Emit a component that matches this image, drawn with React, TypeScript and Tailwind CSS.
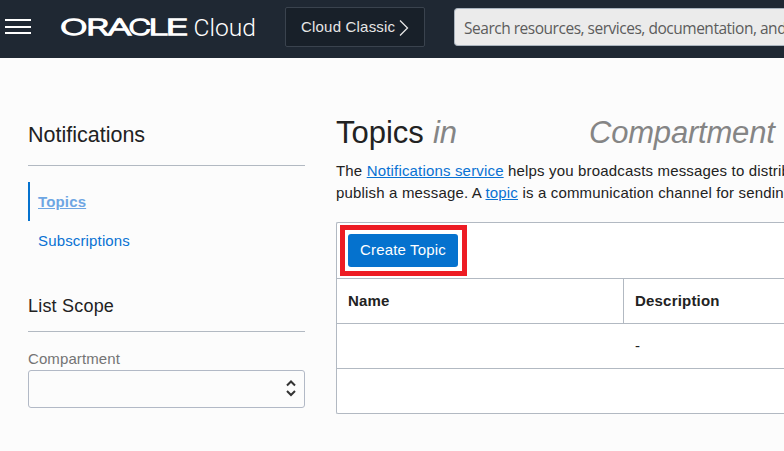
function Header() {
  return (
    <header className="flex h-[58px] shrink-0 items-start bg-[#1f2833]">
      <button aria-label="Menu" className="mt-[19px] ml-[5px] flex w-[26px] shrink-0 flex-col gap-[5px]">
        <span className="h-0.5 bg-white" />
        <span className="h-0.5 bg-white" />
        <span className="-mt-px h-0.5 bg-white" />
      </button>
      <svg className="ml-[29px] h-[58px] w-[200px] shrink-0" viewBox="60 0 200 58" fill="#fff" aria-label="Oracle Cloud">
        <g fontFamily="Inter, sans-serif" fontWeight="200" fontSize="22" stroke="#fff" strokeWidth="1.6">
          <text x="60" y="35.4" textLength="27.5" lengthAdjust="spacingAndGlyphs">O</text>
          <text x="86" y="35.4" textLength="23" lengthAdjust="spacingAndGlyphs">R</text>
          <text x="107.5" y="35.4" textLength="24" lengthAdjust="spacingAndGlyphs">A</text>
          <text x="128.5" y="35.4" textLength="22.5" lengthAdjust="spacingAndGlyphs">C</text>
          <text x="148.5" y="35.4" textLength="20" lengthAdjust="spacingAndGlyphs">L</text>
          <text x="165.5" y="35.4" textLength="23" lengthAdjust="spacingAndGlyphs">E</text>
        </g>
        <text x="193.5" y="36" fontFamily="Roboto, sans-serif" fontWeight="300" fontSize="24.5" textLength="62.5" lengthAdjust="spacingAndGlyphs">Cloud</text>
      </svg>
      <button className="mt-[7px] ml-[25px] flex h-10 w-[140px] shrink-0 items-center rounded-[2px] border border-[#3a434e] bg-[#182029] pl-[15px] text-[15px] tracking-[0.2px] whitespace-nowrap text-[#e6e6e6]">
        Cloud Classic
        <svg className="mt-px ml-[4px] h-4 w-[10px]" viewBox="0 0 10 16" fill="none" stroke="#e6e6e6" strokeWidth="1.3">
          <path d="M1 .5 8.5 8 1 15.5" />
        </svg>
      </button>
      <div className="mt-2 ml-[29px] flex h-[38px] flex-1 items-center overflow-hidden rounded-l-[4px] border border-r-0 border-[#aab4be] bg-[#ebebeb] pt-[3px] pl-[9px] font-['Open_Sans',sans-serif] text-[15.5px] tracking-[-0.48px] whitespace-nowrap text-[#5c5c5c]">
        Search resources, services, documentation, and
      </div>
    </header>
  );
}

function Sidebar() {
  return (
    <aside className="w-[277px] shrink-0 pt-[62px]">
      <h2 className="h-[46px] border-b border-[#b2b9c2] text-[21.5px] leading-[30px]">Notifications</h2>
      <nav className="mt-4 flex flex-col text-[15px] tracking-[0.15px] text-[#0972d3]">
        <a className="flex h-[39px] items-center border-l-2 border-[#0572ce] pt-0.5 pl-2 font-bold text-[#6ea6e3] underline">
          Topics
        </a>
        <a className="flex h-[39px] items-center pt-0.5 pl-[10px]">Subscriptions</a>
      </nav>
      <h3 className="mt-8 h-[40px] border-b border-[#b2b9c2] text-[18px] leading-[28px] tracking-[0.2px]">List Scope</h3>
      <label className="mt-[17px] block h-[21px] text-[15px] leading-5 tracking-[0.1px] text-[#747474]">Compartment</label>
      <div className="flex h-[38px] items-center justify-end rounded-[3px] border border-[#b2b9c6] pr-2">
        <svg className="mb-0.5 h-[18px] w-[10px]" viewBox="0 0 10 18" fill="none" stroke="#333" strokeWidth="2">
          <path d="M1 6.5 5 2.5 9 6.5M1 12 5 16 9 12" />
        </svg>
      </div>
    </aside>
  );
}

function TopicsTable() {
  return (
    <section className="mt-[18px] flex h-[192px] flex-col rounded-l-[2px] border border-r-0 border-[#b2b9c2] bg-white text-[15px]">
      <div className="h-[56px] shrink-0 border-b border-[#b2b9c2] pt-[2px] pl-[3px]">
        <div className="h-[51px] w-[127px] border-[5px] border-[#ed1c24] p-[3px] pt-1">
          <button className="h-[33px] w-[110px] rounded-[3px] bg-[#0572ce] tracking-[0.17px] text-white">Create Topic</button>
        </div>
      </div>
      <div className="flex h-[45px] shrink-0 items-center border-b border-[#b2b9c2] font-bold tracking-[0.2px]">
        <div className="flex h-full w-[287px] shrink-0 items-center border-r border-[#b2b9c2] pl-[11px]">Name</div>
        <div className="pl-[11px]">Description</div>
      </div>
      <div className="flex h-[45px] shrink-0 items-center border-b border-[#b2b9c2] pt-px pl-[298px]">-</div>
    </section>
  );
}

export default function App() {
  return (
    <div className="flex h-[451px] w-[784px] flex-col overflow-hidden bg-[#fcfcfc] font-['Liberation_Sans',Arial,sans-serif] text-[#222]">
      <Header />
      <div className="flex flex-1 pl-7">
        <Sidebar />
        <main className="ml-[31px] min-w-0 flex-1 pt-[55px]">
          <h1 className="flex h-[40px] text-[31px] leading-10 whitespace-nowrap">
            Topics
            <em className="ml-[9px] text-[#858585]">in</em>
            <em className="ml-[132px] tracking-[-0.2px] text-[#858585]">Compartment</em>
          </h1>
          <p className="mt-[7px] text-[15px] leading-[22px] tracking-[0.17px] whitespace-nowrap">
            The <a className="text-[#0972d3] underline">Notifications service</a> helps you broadcasts messages to distrib
            <br />
            publish a message. A <a className="text-[#0972d3] underline">topic</a> is a communication channel for sending
          </p>
          <TopicsTable />
        </main>
      </div>
    </div>
  );
}
